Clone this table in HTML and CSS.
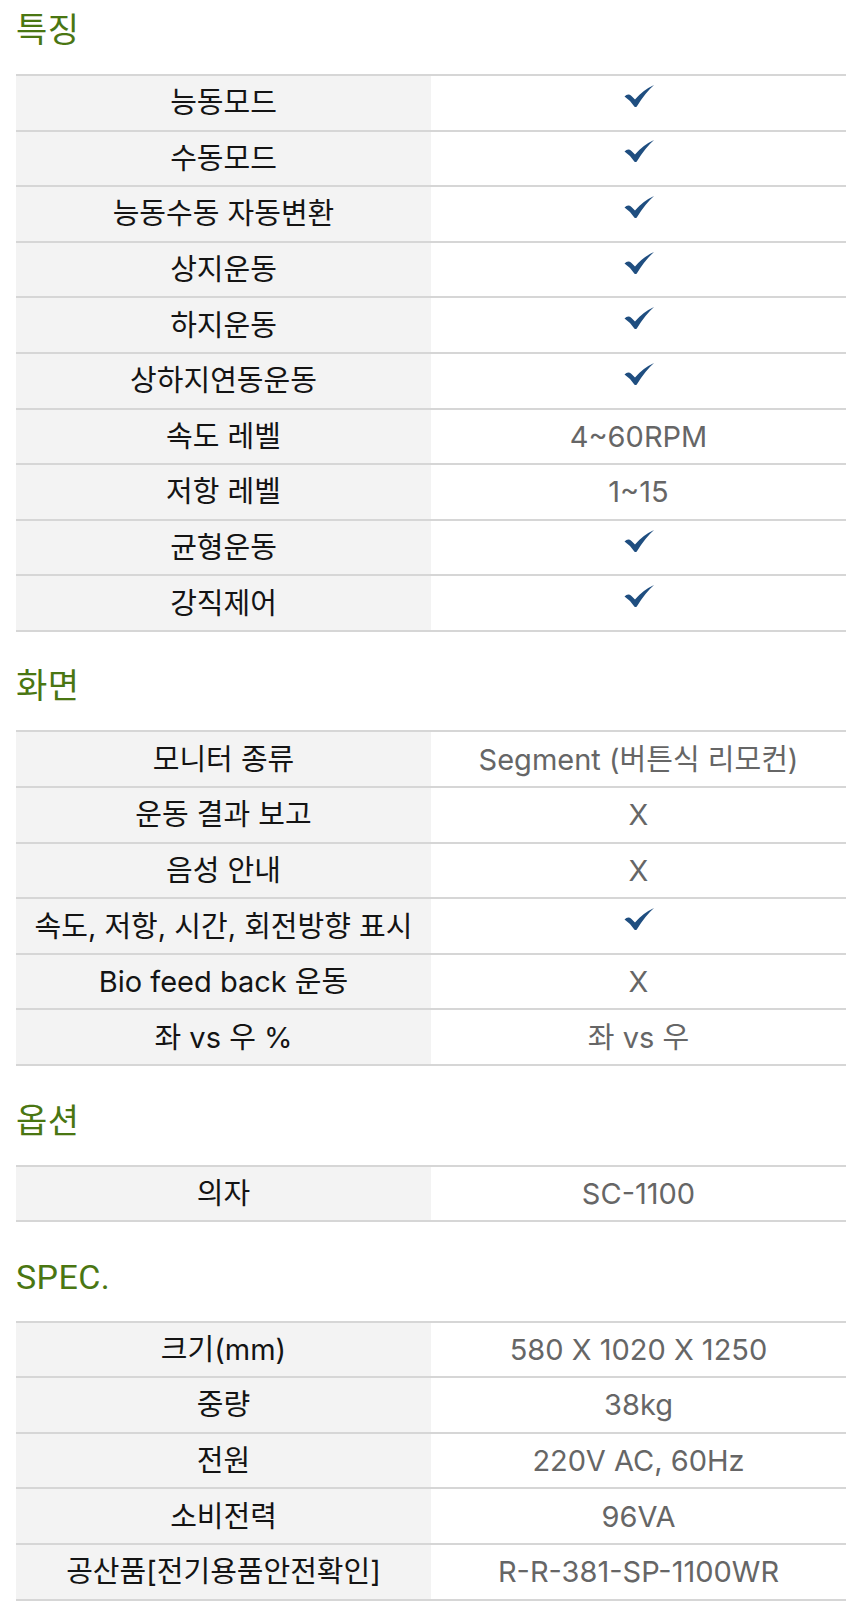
FILE: index.html
```html
<!DOCTYPE html>
<html lang="ko">
<head>
<meta charset="utf-8">
<link rel="stylesheet" href="styles.css">
<title>Spec</title>
</head>
<body>
<svg width="0" height="0" class="defs" aria-hidden="true">
  <defs>
    <symbol id="chk" viewBox="0 0 30 22">
      <path d="M0.5 11.5 Q4 8 7.5 11 L11 14.5 Q19 5 30 0 Q21 8 12.8 21.5 Q11.5 22.8 10.3 21.5 Q6 15 0.5 11.5 Z"/>
    </symbol>
  </defs>
</svg>
<main class="page">
  <section class="block">
    <h2 class="title">특징</h2>
    <div class="grid">
      <div class="row"><div class="k">능동모드</div><div class="v"><svg class="check"><use href="#chk"/></svg></div></div>
      <div class="row"><div class="k">수동모드</div><div class="v"><svg class="check"><use href="#chk"/></svg></div></div>
      <div class="row"><div class="k">능동수동 자동변환</div><div class="v"><svg class="check"><use href="#chk"/></svg></div></div>
      <div class="row"><div class="k">상지운동</div><div class="v"><svg class="check"><use href="#chk"/></svg></div></div>
      <div class="row"><div class="k">하지운동</div><div class="v"><svg class="check"><use href="#chk"/></svg></div></div>
      <div class="row"><div class="k">상하지연동운동</div><div class="v"><svg class="check"><use href="#chk"/></svg></div></div>
      <div class="row"><div class="k">속도 레벨</div><div class="v">4~60RPM</div></div>
      <div class="row"><div class="k">저항 레벨</div><div class="v">1~15</div></div>
      <div class="row"><div class="k">균형운동</div><div class="v"><svg class="check"><use href="#chk"/></svg></div></div>
      <div class="row"><div class="k">강직제어</div><div class="v"><svg class="check"><use href="#chk"/></svg></div></div>
    </div>
  </section>
  <section class="block">
    <h2 class="title">화면</h2>
    <div class="grid">
      <div class="row"><div class="k">모니터 종류</div><div class="v">Segment (버튼식 리모컨)</div></div>
      <div class="row"><div class="k">운동 결과 보고</div><div class="v">X</div></div>
      <div class="row"><div class="k">음성 안내</div><div class="v">X</div></div>
      <div class="row"><div class="k">속도, 저항, 시간, 회전방향 표시</div><div class="v"><svg class="check"><use href="#chk"/></svg></div></div>
      <div class="row"><div class="k">Bio feed back 운동</div><div class="v">X</div></div>
      <div class="row"><div class="k">좌 vs 우 %</div><div class="v">좌 vs 우</div></div>
    </div>
  </section>
  <section class="block">
    <h2 class="title">옵션</h2>
    <div class="grid">
      <div class="row"><div class="k">의자</div><div class="v">SC-1100</div></div>
    </div>
  </section>
  <section class="block">
    <h2 class="title">SPEC.</h2>
    <div class="grid">
      <div class="row"><div class="k">크기(mm)</div><div class="v">580 X 1020 X 1250</div></div>
      <div class="row"><div class="k">중량</div><div class="v">38kg</div></div>
      <div class="row"><div class="k">전원</div><div class="v">220V AC, 60Hz</div></div>
      <div class="row"><div class="k">소비전력</div><div class="v">96VA</div></div>
      <div class="row"><div class="k">공산품[전기용품안전확인]</div><div class="v">R-R-381-SP-1100WR</div></div>
    </div>
  </section>
</main>
</body>
</html>
```
FILE: styles.css
```css
html, body {
  margin: 0;
  padding: 0;
  background: #ffffff;
}
body {
  font-family: Inter, "Noto Sans CJK KR", "Noto Sans", sans-serif;
}
.defs {
  position: absolute;
  width: 0;
  height: 0;
  overflow: hidden;
}
.page {
  padding: 0 14px 14px 16px;
}
.block {
  padding-top: 10px;
}
.block + .block {
  padding-top: 34.5px;
}
.title {
  margin: 0 0 24px 0;
  font-family: Roboto, "Noto Sans CJK KR", sans-serif;
  font-size: 34px;
  font-weight: 400;
  line-height: 40px;
  letter-spacing: 0.4px;
  color: #4a7612;
}
.grid {
  border-top: 2px solid #d6d6d6;
}
.row {
  display: grid;
  grid-template-columns: 1fr 1fr;
  height: 53.6px;
  border-bottom: 2px solid #d6d6d6;
}
.k, .v {
  display: flex;
  align-items: center;
  justify-content: center;
  font-size: 29px;
  line-height: 1;
}
.k {
  background: #f3f3f3;
  color: #141414;
}
.v {
  background: #ffffff;
  color: #666666;
}
.check {
  width: 30px;
  height: 22px;
  fill: #1f4e80;
  margin-top: -14px;
}
```
